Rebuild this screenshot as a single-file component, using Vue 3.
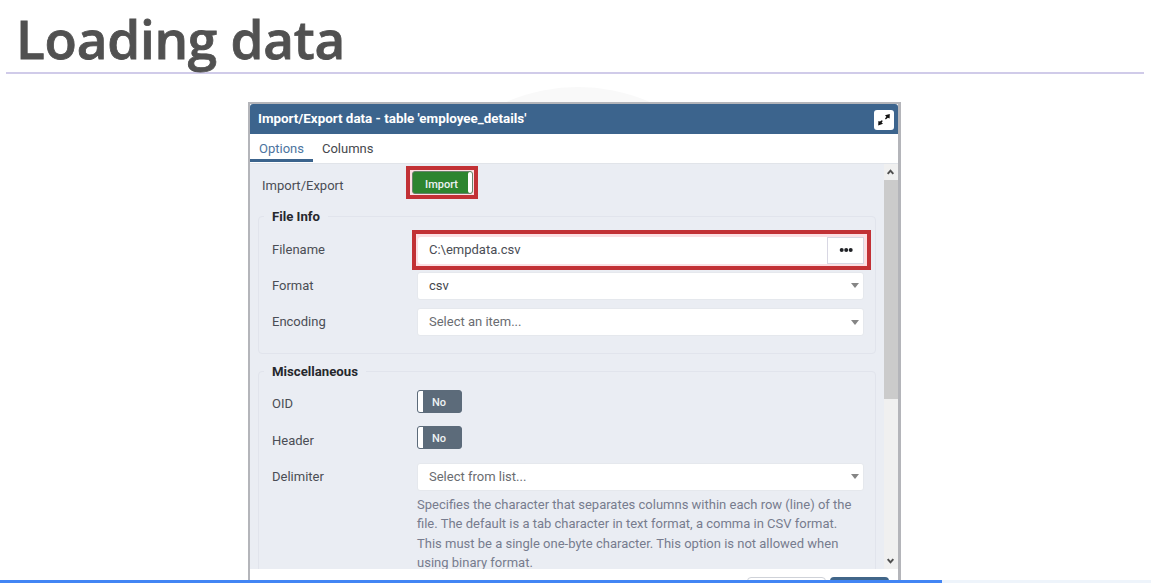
<script setup>
const fileRows = [
  { label: 'Format', value: 'csv', chosen: true },
  { label: 'Encoding', value: 'Select an item...', chosen: false },
]
const switches = ['OID', 'Header']
const help = [
  'Specifies the character that separates columns within each row (line) of the',
  'file. The default is a tab character in text format, a comma in CSV format.',
  'This must be a single one-byte character. This option is not allowed when',
  'using binary format.',
]
</script>

<template>
  <main class="slide">
    <h1><span>Loading data</span></h1>
    <div class="disc"></div>
    <section class="dialog">
      <header class="bar">
        <span class="bar-title">Import/Export data - table 'employee_details'</span>
        <button class="expand" aria-label="Maximize">
          <svg width="20" height="20" viewBox="0 0 20 20">
            <path d="M11 5.2 15.8 4 15.6 8.6 13.9 7.7 11.8 9.4 11 8.6 12.4 6.7Z M9 13.8 4.2 15.4 4.4 11 6 11.6 7.8 10.2 8.8 11 7.6 12.6Z" />
          </svg>
        </button>
      </header>
      <nav class="tabs">
        <span class="tab active">Options</span>
        <span class="tab">Columns</span>
      </nav>
      <div class="body">
        <div class="form">
          <div class="row first">
            <span class="label">Import/Export</span>
            <div class="mark mark-switch">
              <div class="toggle on"><span>Import</span><i></i></div>
            </div>
          </div>
          <div class="group files">
            <div class="legend">File Info</div>
            <div class="row">
              <span class="label">Filename</span>
              <div class="mark mark-file">
                <div class="file"><span>C:\empdata.csv</span></div>
                <button class="browse" aria-label="Browse">
                  <svg width="14" height="6" viewBox="0 0 14 6">
                    <circle cx="2.7" cy="3" r="2" /><circle cx="7.2" cy="3" r="2" /><circle cx="11.7" cy="3" r="2" />
                  </svg>
                </button>
              </div>
            </div>
            <div v-for="r in fileRows" :key="r.label" class="row">
              <span class="label">{{ r.label }}</span>
              <div class="select" :class="{ chosen: r.chosen }"><span>{{ r.value }}</span><b></b></div>
            </div>
          </div>
          <div class="group misc">
            <div class="legend">Miscellaneous</div>
            <div v-for="s in switches" :key="s" class="row switch-row">
              <span class="label">{{ s }}</span>
              <div class="toggle off"><i></i><span>No</span></div>
            </div>
            <div class="row">
              <span class="label">Delimiter</span>
              <div class="select"><span>Select from list...</span><b></b></div>
            </div>
            <div class="help"><div v-for="h in help" :key="h">{{ h }}</div></div>
          </div>
        </div>
        <div class="scroll">
          <svg width="13" height="16" viewBox="0 0 13 16"><path d="M3.7 9.8 6.5 6.7 9.3 9.8" /></svg>
          <div class="thumb"></div>
          <svg class="down" width="13" height="17" viewBox="0 0 13 17"><path d="M3.7 7.2 6.5 10.3 9.3 7.2" /></svg>
        </div>
      </div>
      <footer class="foot">
        <div class="btn cancel"></div>
        <div class="btn ok"></div>
      </footer>
    </section>
    <div class="progress"><div></div></div>
  </main>
</template>

<style>
body { margin: 0; background: #fff; }
</style>

<style scoped>
* { box-sizing: border-box; }
.slide {
  position: relative; width: 1151px; height: 583px; overflow: hidden; background: #fff;
  font: 13px/19.5px Roboto, "Liberation Sans", sans-serif; color: #4a4d55;
}
h1 {
  margin: 0 7px 0 6px; height: 74px; padding-left: 10px; border-bottom: 2px solid #d0cbe9;
  font: 600 53px/78px "Open Sans", "Noto Sans", sans-serif; color: #515151; white-space: nowrap;
  letter-spacing: -0.25px; -webkit-text-stroke: 0.8px #515151;
}
.disc {
  position: absolute; left: 398px; top: 87px; width: 360px; height: 360px;
  border-radius: 50%; background: #f9f9f9;
}
.dialog {
  position: relative; width: 653px; height: 500px; margin: 28px 0 0 248px;
  border: 2px solid #b4b5ba; border-right-width: 3px; background: #fff;
  display: flex; flex-direction: column;
}
.bar {
  height: 30px; flex: none; display: flex; align-items: center; justify-content: space-between;
  padding: 0 4px 0 8px; background: #3c648d; border-radius: 3px 3px 0 0; color: #fff; font-weight: 700;
}
.bar-title { font-size: 13.4px; letter-spacing: 0; }
button { padding: 0; border: 0; background: #fff; }
.expand { width: 20px; height: 20px; margin-top: 2px; border-radius: 3px; display: flex; }
.expand path { fill: #111; }
.tabs { height: 29px; flex: none; display: flex; }
.tab { height: 28px; padding: 5px 9px 0; font-size: 13px; color: #45484d; }
.tab.active { color: #4c74a0; border-bottom: 3px solid #3c648d; }
.body { height: 406px; flex: none; display: flex; background: #eaedf3; border-top: 1px solid #e1e4e9; overflow: hidden; }
.form { width: 634px; padding: 0 9px 0 8px; }
.row { display: flex; align-items: center; height: 36.3px; }
.label { width: 145px; flex: none; }
.first { height: 52px; align-items: flex-start; padding: 2px 0 0 4px; }
.first .label { padding-top: 10px; }
.mark { border: 4px solid #c23135; background: #fcdfe3; }
.mark-switch { width: 72px; height: 33px; padding: 1px 2px; margin-left: -1px; }
.toggle { display: flex; align-items: center; border-radius: 3px; color: #eef2f4; font-size: 11px; font-weight: 500; }
.toggle i { background: #fff; flex: none; }
.toggle.on { width: 61px; height: 23px; background: #2d852f; border: 1px solid #66836a; }
.toggle.on span { flex: 1; text-align: center; padding: 4px 0 0 2px; }
.toggle.on i { width: 4px; height: 21px; border-radius: 2px; }
.toggle.off { width: 45px; height: 23px; background: #5c6b7a; border: 1px solid #5c6b7a; margin: -5px 0 0; }
.toggle.off i { width: 5px; height: 21px; border-radius: 2px 0 0 2px; }
.toggle.off span { margin-left: 9px; padding-top: 2px; }
.group { position: relative; width: 618px; border: 1px solid #e1e4ec; border-radius: 4px; padding-left: 13px; }
.files { height: 138px; padding-top: 14.5px; }
.misc { height: 300px; margin-top: 17px; padding-top: 14px; }
.legend {
  position: absolute; left: 5px; top: -10px; padding: 0 8px; background: #eaedf3;
  font-weight: 700; color: #26282d; font-size: 13.2px;
}
.mark-file { width: 459px; height: 40px; flex: none; margin-left: -5px; padding: 3px 3px 2px 2px; display: flex; }
.file { flex: 1; background: #fff; padding: 3.5px 0 0 11px; border-radius: 3px 0 0 3px; }
.browse { width: 37px; border: 1px solid #d8d7e3; display: flex; align-items: center; justify-content: center; }
.browse circle { fill: #202226; }
.select {
  width: 447px; height: 28px; flex: none; display: flex; align-items: center; justify-content: space-between;
  background: #fff; border: 1px solid #e5e8ed; border-radius: 3px; padding: 0 4px 0 11px; color: #6a6c71;
}
.select.chosen { color: #44474d; }
.select b { border: 4px solid transparent; border-top: 5px solid #858585; border-bottom: 0; }
.help { margin-left: 145px; color: #777c8e; white-space: nowrap; font-size: 13px; line-height: 19.5px; }
.scroll { width: 14px; background: #f0f0f0; display: flex; flex-direction: column; }
.scroll path { fill: none; stroke: #505050; stroke-width: 2; }
.thumb { height: 219px; background: #cbcbcb; }
.down { margin-top: auto; }
.foot { flex: 1; display: flex; justify-content: flex-end; gap: 4px; padding: 8px 9px 0 0; }
.btn { height: 25px; border-radius: 4px; }
.cancel { width: 79px; border: 1px solid #cfd2d8; }
.ok { width: 59px; background: #416689; }
.progress { position: absolute; left: 0; right: 0; bottom: 0; height: 3px; background: #eef4fb; }
.progress div { width: 942px; height: 3px; background: #4285f4; }
</style>
